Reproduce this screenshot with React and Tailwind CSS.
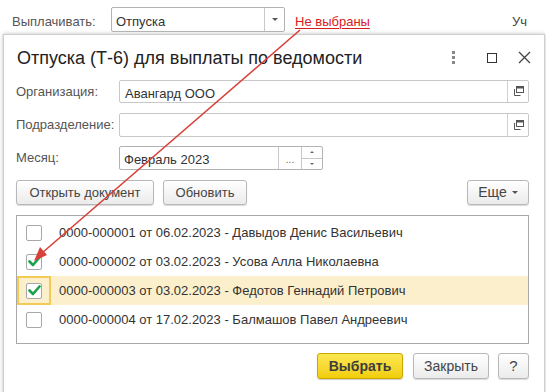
const rows = [
  { text: '0000-000001 от 06.02.2023 - Давыдов Денис Васильевич', checked: false },
  { text: '0000-000002 от 03.02.2023 - Усова Алла Николаевна', checked: true },
  { text: '0000-000003 от 03.02.2023 - Федотов Геннадий Петрович', checked: true, current: true },
  { text: '0000-000004 от 17.02.2023 - Балмашов Павел Андреевич', checked: false },
];

function Check() {
  return (
    <svg width="13" height="11" viewBox="0 0 13 11" className="absolute left-[1px] top-[1px]">
      <path d="M1.5 5.5 L5 9 L11.5 1.5" fill="none" stroke="#16a34a" strokeWidth="2.6" strokeLinecap="round" strokeLinejoin="round" />
    </svg>
  );
}

function Checkbox({ checked }) {
  return (
    <div className="relative w-[16px] h-[16px] border border-[#a8a8a8] rounded-[2px] bg-white">
      {checked && <Check />}
    </div>
  );
}

function OpenIcon() {
  return (
    <svg width="11" height="11" viewBox="0 0 11 11">
      <rect x="3.5" y="0.5" width="7" height="6" fill="none" stroke="#555" />
      <path d="M1.5 3 V9.5 H7.5" fill="none" stroke="#555" />
      <rect x="3.5" y="0.5" width="7" height="2" fill="#555" />
    </svg>
  );
}

function Btn({ children, className = '' }) {
  return (
    <div className={`h-[25px] flex items-center justify-center border border-[#b8b8b8] rounded-[3px] bg-gradient-to-b from-white to-[#ebebeb] shadow-[0_1px_1px_rgba(0,0,0,0.15)] text-[13px] text-[#444] ${className}`}>
      {children}
    </div>
  );
}

export default function App() {
  return (
    <div className="relative w-[546px] h-[392px] bg-white overflow-hidden" style={{ fontFamily: '"Liberation Sans", Arial, sans-serif' }}>
      {/* top bar of the underlying form */}
      <div className="h-[34px] flex items-start pt-[7px]">
        <div className="w-[111px] pl-[12px] pt-[5px] text-[13px] text-[#555]">Выплачивать:</div>
        <div className="w-[174px] h-[25px] flex border border-[#b3b3b3] rounded-[2px]">
          <div className="flex-1 pl-[4px] pt-[4px] text-[13px] text-[#333]">Отпуска</div>
          <div className="w-[20px] border-l border-[#c8c8c8] flex items-center justify-center">
            <div className="w-0 h-0 border-l-[3px] border-r-[3px] border-t-[3px] border-l-transparent border-r-transparent border-t-[#555]" />
          </div>
        </div>
        <div className="ml-[10px] pt-[5px] text-[13px] text-[#d91b1b] underline underline-offset-2">Не выбраны</div>
        <div className="ml-auto pt-[5px] text-[13px] text-[#444] w-[34px]">Уч</div>
      </div>

      {/* dialog */}
      <div className="ml-[3px] w-[542px] h-[370px] border border-[#cfcfcf] bg-white shadow-[0_0_4px_rgba(0,0,0,0.25)]">
        <div className="h-[45px] flex items-center pl-[13px] pr-[13px]">
          <div className="flex-1 text-[18px] text-[#222] pt-[1px]">Отпуска (Т-6) для выплаты по ведомости</div>
          <div className="w-[26px] flex flex-col items-center gap-[2px] mr-[4px]">
            <span className="w-[3px] h-[3px] bg-[#888]" />
            <span className="w-[3px] h-[3px] bg-[#888]" />
            <span className="w-[3px] h-[3px] bg-[#888]" />
          </div>
          <div className="w-[10px] h-[10px] border border-[#333] ml-[17px]" />
          <svg width="13" height="13" viewBox="0 0 13 13" className="ml-[21px]">
            <path d="M1 1 L12 12 M12 1 L1 12" stroke="#444" strokeWidth="1.3" />
          </svg>
        </div>

        <div className="pl-[12px] pr-[15px]">
          {/* Организация */}
          <div className="flex items-center h-[23px]">
            <div className="w-[103px] text-[13px] text-[#555]">Организация:</div>
            <div className="flex-1 h-[23px] flex border border-[#c8c8c8] rounded-[2px]">
              <div className="flex-1 pl-[5px] pt-[3px] text-[13px] text-[#333]">Авангард ООО</div>
              <div className="w-[21px] border-l border-[#d0d0d0] flex items-center justify-center"><OpenIcon /></div>
            </div>
          </div>
          {/* Подразделение */}
          <div className="flex items-center h-[24px] mt-[10px]">
            <div className="w-[103px] text-[13px] text-[#555]">Подразделение:</div>
            <div className="flex-1 h-[24px] flex border border-[#c8c8c8] rounded-[2px]">
              <div className="flex-1" />
              <div className="w-[21px] border-l border-[#d0d0d0] flex items-center justify-center"><OpenIcon /></div>
            </div>
          </div>
          {/* Месяц */}
          <div className="flex items-center h-[24px] mt-[9px]">
            <div className="w-[103px] text-[13px] text-[#555]">Месяц:</div>
            <div className="w-[204px] h-[24px] flex border border-[#b3b3b3] rounded-[2px]">
              <div className="flex-1 pl-[4px] pt-[3px] text-[13px] text-[#333]">Февраль 2023</div>
              <div className="w-[23px] border-l border-[#c8c8c8] flex items-center justify-center text-[10px] text-[#666] pt-[3px]">...</div>
              <div className="w-[21px] border-l border-[#c8c8c8] flex flex-col">
                <div className="flex-1 border-b border-[#c8c8c8] flex items-center justify-center">
                  <div className="w-0 h-0 border-l-[2px] border-r-[2px] border-b-[2px] border-l-transparent border-r-transparent border-b-[#666]" />
                </div>
                <div className="flex-1 flex items-center justify-center">
                  <div className="w-0 h-0 border-l-[2px] border-r-[2px] border-t-[2px] border-l-transparent border-r-transparent border-t-[#666]" />
                </div>
              </div>
            </div>
          </div>
          {/* command bar */}
          <div className="flex mt-[10px]">
            <Btn className="w-[138px]">Открыть документ</Btn>
            <Btn className="w-[84px] ml-[9px]">Обновить</Btn>
            <Btn className="w-[62px] ml-auto gap-[5px] text-[14px]">
              Еще
              <div className="w-0 h-0 border-l-[3px] border-r-[3px] border-t-[3px] border-l-transparent border-r-transparent border-t-[#555]" />
            </Btn>
          </div>
          {/* list */}
          <div className="mt-[10px] h-[129px] border border-[#a9a9a9] pt-[2px]">
            {rows.map((r, i) => (
              <div key={i} className={`flex items-center h-[29px] ${r.current ? 'bg-[#fbefcc]' : ''}`}>
                <div className={`w-[34px] h-[29px] flex items-center justify-center ${r.current ? 'border-2 border-[#f2cb56]' : ''}`}>
                  <Checkbox checked={r.checked} />
                </div>
                <div className="pl-[8px] text-[13px] text-[#333]">{r.text}</div>
              </div>
            ))}
          </div>
          {/* bottom buttons */}
          <div className="flex justify-end mt-[9px]">
            <div className="w-[86px] h-[26px] flex items-center justify-center rounded-[3px] border border-[#c9a800] bg-gradient-to-b from-[#fde84f] to-[#f2cd00] shadow-[0_1px_1px_rgba(0,0,0,0.2)] text-[14px] font-bold text-[#3d3d3d]">Выбрать</div>
            <Btn className="w-[76px] ml-[10px] h-[26px] text-[14px]">Закрыть</Btn>
            <Btn className="w-[31px] ml-[9px] h-[26px] text-[15px]">?</Btn>
          </div>
        </div>
      </div>

      {/* red annotation arrow */}
      <svg className="absolute left-0 top-0 pointer-events-none" width="546" height="392">
        <line x1="300" y1="30" x2="42" y2="253" stroke="#d8403a" strokeWidth="1.6" />
        <path d="M34 261 L40 247 L47 255 Z" fill="#d8403a" />
      </svg>
    </div>
  );
}
